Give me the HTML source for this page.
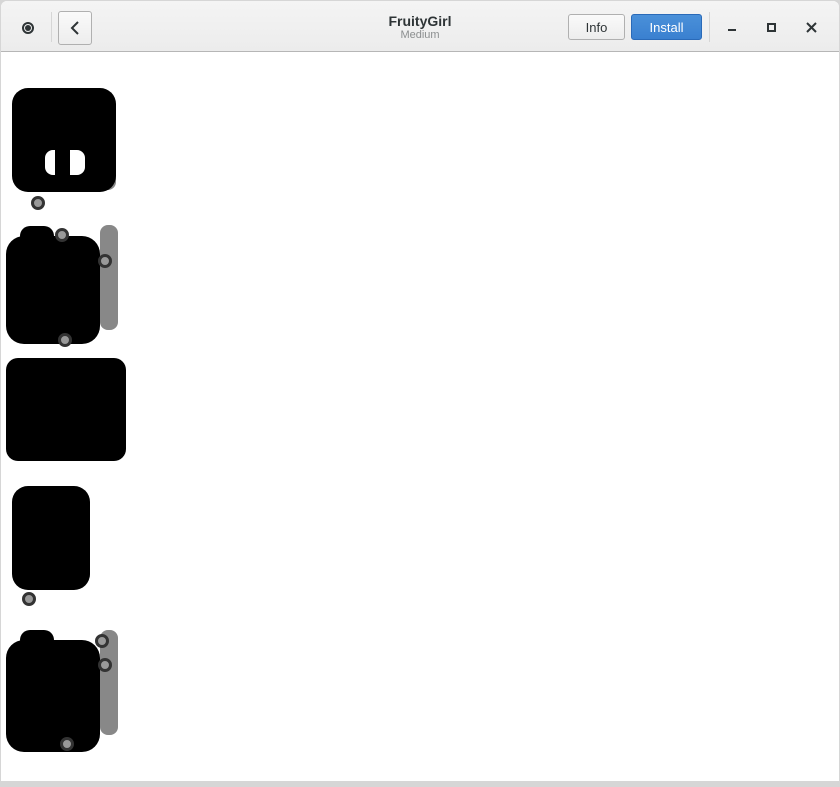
<html><head><style>
body{margin:0;width:840px;height:787px;background:#d6d6d6;font-family:"Liberation Sans",sans-serif;position:relative;overflow:hidden}
.win{position:absolute;left:1px;top:1px;width:838px;height:785px;background:#fff;border-radius:6px 6px 0 0}
.hb{position:absolute;left:1px;top:1px;width:838px;height:50px;background:linear-gradient(#f4f4f4,#ececec);border-bottom:1px solid #b6b6b6;border-radius:6px 6px 0 0}
.b{position:absolute;background:#000}
.g{position:absolute;background:#888;border-radius:8px}
.r{position:absolute;border:3px solid #333;border-radius:50%;background:#999;width:8px;height:8px}
.btn{position:absolute;top:14px;height:26px;border:1px solid #b0b0b0;border-radius:3px;background:linear-gradient(#fafafa,#ededed);font-size:13px;line-height:26px;text-align:center;color:#2e3436;box-sizing:border-box}
.sep{position:absolute;top:12px;width:1px;height:30px;background:#d6d6d6}
.bot{position:absolute;left:0;top:781px;width:840px;height:6px;background:#d6d6d6}
</style></head><body>
<div class="win"></div>
<div class="hb"></div>
<div style="position:absolute;left:22px;top:22px;width:8px;height:8px;border:2px solid #2e3436;border-radius:50%"></div>
<div style="position:absolute;left:25px;top:25px;width:6px;height:6px;background:#2e3436;border-radius:50%"></div>
<div class="sep" style="left:51px"></div>
<div class="btn" style="left:58px;top:11px;width:34px;height:34px"><svg width="34" height="32" viewBox="0 0 34 32"><path d="M19 10l-6 6 6 6" fill="none" stroke="#2e3436" stroke-width="2"/></svg></div>
<div style="position:absolute;left:0;width:840px;top:13px;text-align:center;font-size:14px;font-weight:bold;color:#2e3436">FruityGirl</div>
<div style="position:absolute;left:0;width:840px;top:29px;text-align:center;font-size:11px;color:#8b8e8f">Medium</div>
<div class="btn" style="left:568px;width:57px">Info</div>
<div class="btn" style="left:631px;width:71px;background:linear-gradient(#4a90d9,#3a80d0);border-color:#2a6ab8;color:#fff">Install</div>
<div class="sep" style="left:709px"></div>
<div style="position:absolute;left:728px;top:29px;width:8px;height:2px;background:#2e3436"></div>
<div style="position:absolute;left:767px;top:23px;width:5px;height:5px;border:2px solid #2e3436"></div>
<svg style="position:absolute;left:806px;top:22px" width="11" height="11"><path d="M1 1l9 9M10 1l-9 9" stroke="#2e3436" stroke-width="2"/></svg>
<div class="bot"></div>

<div class="g" style="left:100px;top:100px;width:16px;height:90px"></div>
<div class="b" style="left:12px;top:88px;width:104px;height:104px;border-radius:16px"></div>
<div style="position:absolute;left:45px;top:150px;width:40px;height:25px;background:#fff;border-radius:8px"></div>
<div class="b" style="left:55px;top:150px;width:15px;height:25px"></div>
<div class="r" style="left:31px;top:196px"></div>

<div class="g" style="left:100px;top:225px;width:18px;height:105px"></div>
<div class="b" style="left:6px;top:236px;width:94px;height:108px;border-radius:18px"></div>
<div class="b" style="left:20px;top:226px;width:34px;height:20px;border-radius:10px"></div>
<div class="r" style="left:55px;top:228px"></div>
<div class="r" style="left:98px;top:254px"></div>
<div class="r" style="left:58px;top:333px"></div>

<div class="b" style="left:6px;top:358px;width:120px;height:103px;border-radius:12px"></div>

<div class="g" style="left:80px;top:500px;width:10px;height:80px"></div>
<div class="b" style="left:12px;top:486px;width:78px;height:104px;border-radius:16px"></div>
<div class="r" style="left:22px;top:592px"></div>

<div class="g" style="left:100px;top:630px;width:18px;height:105px"></div>
<div class="b" style="left:6px;top:640px;width:94px;height:112px;border-radius:18px"></div>
<div class="b" style="left:20px;top:630px;width:34px;height:20px;border-radius:10px"></div>
<div class="r" style="left:95px;top:634px"></div>
<div class="r" style="left:98px;top:658px"></div>
<div class="r" style="left:60px;top:737px"></div>
</body></html>
